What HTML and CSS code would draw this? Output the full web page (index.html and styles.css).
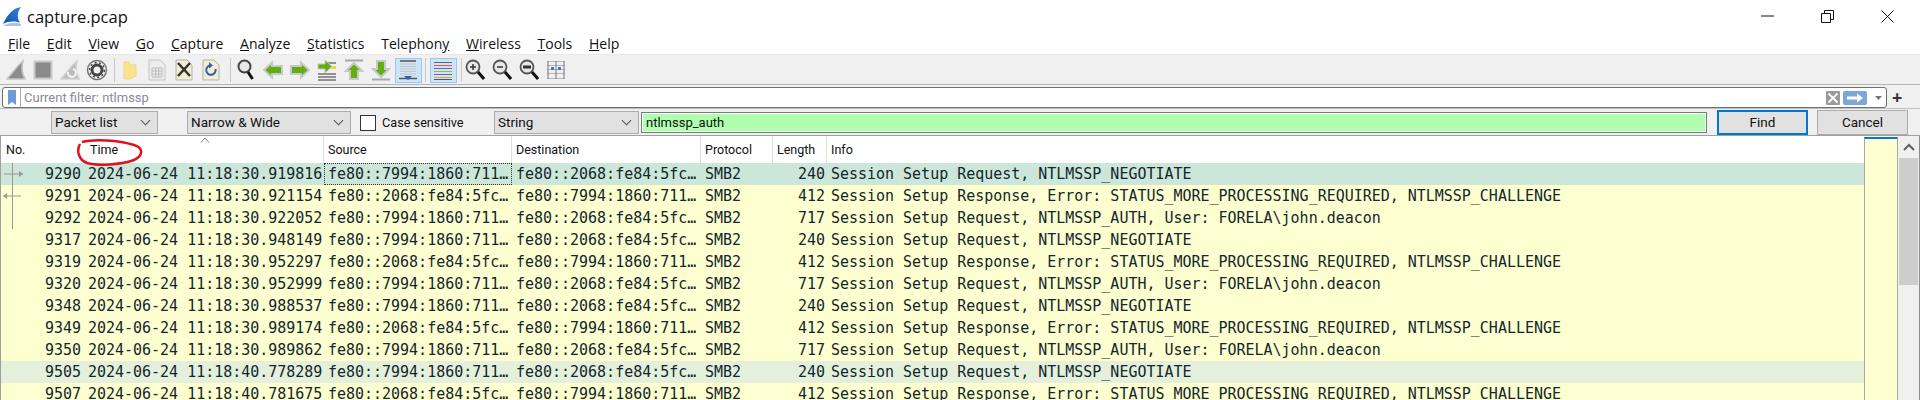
FILE: index.html

```html
<!DOCTYPE html>
<html lang="en">
<head>
    <meta charset="UTF-8">
    <title>capture.pcap</title>
    <link rel="stylesheet" href="styles.css">
</head>
<body>
    <div class="titlebar">
        <svg class="shark" width="20" height="21" viewBox="0 0 20 21">
            <defs><linearGradient id="fin" x1="0" y1="1" x2="1" y2="0"><stop offset="0" stop-color="#0b4fb0"/><stop offset="1" stop-color="#2f86e0"/></linearGradient></defs>
            <path d="M19 1 C11 2 5 9 1 18 C7 15 13 15 18 17 C15 12 15 6 19 1Z" fill="url(#fin)"/>
            <path d="M1 20 C7 16 13 16 19 18 L19 20Z" fill="#a8c4de"/>
        </svg>
        <span class="title">capture.pcap</span>
        <div class="winbtns">
            <svg class="win-min" width="14" height="2" viewBox="0 0 14 2"><path d="M0 1H13" stroke="#111" stroke-width="1"/></svg>
            <svg class="win-max" width="13" height="13" viewBox="0 0 13 13"><path d="M.5 3.500H9.500V12.500H.5ZM3.500 3V.5H12.500V9.500H10" fill="none" stroke="#111"/></svg>
            <svg class="win-close" width="13" height="13" viewBox="0 0 13 13"><path d="M.5 .5L12.500 12.500M12.500 .5L.5 12.500" stroke="#111"/></svg>
        </div>
    </div>

    <div class="menubar">
        <span><u>F</u>ile</span>
        <span><u>E</u>dit</span>
        <span><u>V</u>iew</span>
        <span><u>G</u>o</span>
        <span><u>C</u>apture</span>
        <span><u>A</u>nalyze</span>
        <span><u>S</u>tatistics</span>
        <span>Telephon<u>y</u></span>
        <span><u>W</u>ireless</span>
        <span><u>T</u>ools</span>
        <span><u>H</u>elp</span>
    </div>

    <div class="toolbar">
        <div class="tool"><svg width="20" height="22" viewBox="0 0 20 22"><path d="M1 20 C6 15 10 8 17 2 C15 9 16 15 19 20Z" fill="#8c8c8c" stroke="#c4c4c4" stroke-width="1.500"/></svg></div>
        <div class="tool"><svg width="20" height="20" viewBox="0 0 20 20"><rect x="1.500" y="1.500" width="17" height="17" fill="#8a8a8a" stroke="#c8c8c8" stroke-width="2"/></svg></div>
        <div class="tool"><svg width="20" height="22" viewBox="0 0 20 22"><path d="M1 20 C6 15 10 8 17 2 C15 9 16 15 19 20Z" fill="#bdbdbd" stroke="#d0d0d0" stroke-width="1.500"/><path d="M13 10 A4 4 0 1 1 8 13" fill="none" stroke="#f4f4f4" stroke-width="2"/></svg></div>
        <div class="tool"><svg width="22" height="22" viewBox="0 0 22 22"><circle cx="11" cy="11" r="9.500" fill="#f2f2f2" stroke="#777" stroke-width="1.500"/><circle cx="11" cy="11" r="5" fill="none" stroke="#444" stroke-width="3"/><circle cx="11" cy="11" r="7.400" fill="none" stroke="#444" stroke-width="1.500" stroke-dasharray="2 2.600"/></svg></div>
        <i class="sep s1"></i>
        <div class="tool"><svg width="14" height="19" viewBox="0 0 14 19"><path d="M1 1H6L7.500 4H13V15L7 18H1Z" fill="#fbe38e" stroke="#efd883"/></svg></div>
        <div class="tool"><svg width="18" height="22" viewBox="0 0 18 22"><path d="M1 1H12L17 6V21H1Z" fill="#ececec" stroke="#c4c4c4"/><path d="M4 9H14V18H4ZM4 12H14M4 15H14M7.500 9V18M10.500 9V18" fill="none" stroke="#bcbcbc"/></svg></div>
        <div class="tool"><svg width="18" height="22" viewBox="0 0 18 22"><path d="M1 1H12L17 6V21H1Z" fill="#f6edcf" stroke="#a8b4bc"/><path d="M3 4L15 17M15 4L3 17" stroke="#333" stroke-width="2.500"/></svg></div>
        <div class="tool"><svg width="18" height="22" viewBox="0 0 18 22"><path d="M1 1H12L17 6V21H1Z" fill="#f6edcf" stroke="#a8b4bc"/><path d="M13.500 10A4.700 4.700 0 1 1 8 6.500" fill="none" stroke="#2b62b0" stroke-width="2"/><path d="M7 3L11 6.500L7 9.500Z" fill="#2b62b0"/></svg></div>
        <i class="sep s2"></i>
        <div class="tool"><svg width="18" height="22" viewBox="0 0 18 22"><circle cx="7.500" cy="7.500" r="6" fill="#e8e8e8" stroke="#444" stroke-width="2"/><path d="M11 13L15.500 20" stroke="#111" stroke-width="3"/></svg></div>
        <div class="tool"><svg width="22" height="20" viewBox="0 0 22 20"><path d="M2 10L10 2.500V6H20V14H10V17.500Z" fill="#62ad12" stroke="#c8c8c8" stroke-width="2"/></svg></div>
        <div class="tool"><svg width="22" height="20" viewBox="0 0 22 20"><path d="M20 10L12 2.500V6H2V14H12V17.500Z" fill="#62ad12" stroke="#c8c8c8" stroke-width="2"/></svg></div>
        <div class="tool"><svg width="20" height="22" viewBox="0 0 20 22"><path d="M9 4H19M13 8H19M1 15H19M1 18H19M1 21H19" stroke="#333"/><path d="M14 7H19V10H14Z" fill="#f5d33b"/><path d="M1 5H8V1L15 7.500L8 14V10H1Z" fill="#62ad12" stroke="#c8c8c8"/></svg></div>
        <div class="tool"><svg width="20" height="22" viewBox="0 0 20 22"><path d="M1 1.500H19" stroke="#a8a8a8" stroke-width="2"/><path d="M10 4L18 12H14V20H6V12H2Z" fill="#62ad12" stroke="#c8c8c8" stroke-width="2"/></svg></div>
        <div class="tool"><svg width="20" height="22" viewBox="0 0 20 22"><path d="M1 20.500H19" stroke="#a8a8a8" stroke-width="2"/><path d="M10 18L18 10H14V2H6V10H2Z" fill="#62ad12" stroke="#c8c8c8" stroke-width="2"/></svg></div>
        <div class="tool on"><svg width="20" height="22" viewBox="0 0 20 22"><path d="M2 2H18" stroke="#777" stroke-width="2"/><path d="M2 5H18M2 7.500H18M2 10H18M2 12.500H18M2 15H18" stroke="#c6c6c6"/><path d="M1 19.500H19" stroke="#555" stroke-width="1.500"/><path d="M6 17H14L10 21Z" fill="#2a5fb0"/></svg></div>
        <i class="sep s3"></i>
        <div class="tool on"><svg width="20" height="20" viewBox="0 0 20 20"><path d="M1 2.500H19" stroke="#666"/><path d="M1 5.500H19" stroke="#e85050"/><path d="M1 8.500H19" stroke="#6a6ab0"/><path d="M1 11.500H19" stroke="#8dc040"/><path d="M1 14.500H19" stroke="#8a5aa0"/><path d="M1 17.500H19" stroke="#d0a840"/><path d="M1 19.500H19" stroke="#555"/></svg></div>
        <i class="sep s4"></i>
        <div class="tool"><svg width="20" height="22" viewBox="0 0 20 22"><circle cx="8" cy="8" r="6.500" fill="#e8e8e8" stroke="#555" stroke-width="1.800"/><path d="M5 8H11M8 5V11" stroke="#333" stroke-width="1.500"/><path d="M13 13L19 20" stroke="#111" stroke-width="3"/></svg></div>
        <div class="tool"><svg width="20" height="22" viewBox="0 0 20 22"><circle cx="8" cy="8" r="6.500" fill="#e8e8e8" stroke="#555" stroke-width="1.800"/><path d="M5 8H11" stroke="#333" stroke-width="1.500"/><path d="M13 13L19 20" stroke="#111" stroke-width="3"/></svg></div>
        <div class="tool"><svg width="20" height="22" viewBox="0 0 20 22"><circle cx="8" cy="8" r="6.500" fill="#e8e8e8" stroke="#555" stroke-width="1.800"/><path d="M4 8H12" stroke="#333" stroke-width="3"/><path d="M13 13L19 20" stroke="#111" stroke-width="3"/></svg></div>
        <div class="tool"><svg width="20" height="20" viewBox="0 0 20 20"><path d="M1 1.500H19M1 18.500H19M1 5.500H19M1 9.500H19M1 13.500H19" stroke="#b4b4b4"/><path d="M2 1V19M10 1V19M18 1V19" stroke="#777"/><path d="M5 7H8V10H5ZM12 7H15V10H12Z" fill="#3f74c4"/></svg></div>
    </div>

    <div class="filterbar">
        <div class="filter">
            <div class="bookmark"><svg width="8" height="15" viewBox="0 0 8 15"><path d="M0 0H8V15L4 12L0 15Z" fill="#6c9bd6"/></svg></div>
            <span class="filter-text">Current filter: ntlmssp</span>
            <svg class="clear" width="14" height="14" viewBox="0 0 14 14"><rect width="14" height="14" rx="1" fill="#9a9a9a"/><path d="M2.500 2.500L11.500 11.500M11.500 2.500L2.500 11.500" stroke="#fff" stroke-width="1.800"/></svg>
            <svg class="apply" width="24" height="14" viewBox="0 0 24 14"><rect width="24" height="14" rx="2" fill="#7ba7d9"/><path d="M4 5.500H14V2.500L20 7L14 11.500V8.500H4Z" fill="#fff"/></svg>
            <svg class="drop" width="7" height="4" viewBox="0 0 7 4"><path d="M0 0H7L3.500 4Z" fill="#777"/></svg>
        </div>
        <span class="plus">+</span>
    </div>

    <div class="findbar">
        <div class="combo combo-list">Packet list</div>
        <div class="combo combo-width">Narrow &amp; Wide</div>
        <label class="check"><i></i>Case sensitive</label>
        <div class="combo combo-type">String</div>
        <div class="find-input">ntlmssp_auth</div>
        <div class="btn btn-find">Find</div>
        <div class="btn btn-cancel">Cancel</div>
    </div>

    <div class="packets">
        <div class="list">
            <div class="head">
                <span class="c-no">No.</span>
                <span class="c-time">Time</span>
                <span class="c-src">Source</span>
                <span class="c-dst">Destination</span>
                <span class="c-proto">Protocol</span>
                <span class="c-len">Length</span>
                <span class="c-info">Info</span>
            </div>
            <div id="rows"></div>

            <svg class="sort" width="10" height="6" viewBox="0 0 10 6"><path d="M1 5.500L5 1L9 5.500" fill="none" stroke="#777"/></svg>
            <svg class="mark" width="70" height="28" viewBox="0 0 70 28"><path d="M6 3 C18 0 42 1 58 6 C68 9 67 17 58 21 C44 26 22 27 11 24 C3 21 0 12 4 5" fill="none" stroke="#e2101c" stroke-width="2.500"/></svg>
            <svg class="related" width="24" height="66" viewBox="0 0 24 66"><path d="M11.500 0V66" stroke="#999"/><path d="M3 11H22" stroke="#999"/><path d="M18 8L22 11L18 14Z" fill="#999"/><path d="M2 33H20" stroke="#999"/><path d="M6 30L2 33L6 36Z" fill="#999"/></svg>
        </div>
        <div class="minimap"></div>
        <div class="scrollbar">
            <div class="scroll-up"><svg width="12" height="8" viewBox="0 0 12 8"><path d="M1 7L6 2L11 7" fill="none" stroke="#606060" stroke-width="2"/></svg></div>
            <div class="thumb"></div>
        </div>
    </div>

    <script>
        // n, time, source, destination, length, info
        var a = 'fe80::7994:1860:711…';
        var b = 'fe80::2068:fe84:5fc…';
        var neg = 'Session Setup Request, NTLMSSP_NEGOTIATE';
        var chal = 'Session Setup Response, Error: STATUS_MORE_PROCESSING_REQUIRED, NTLMSSP_CHALLENGE';
        var auth = 'Session Setup Request, NTLMSSP_AUTH, User: FORELA\\john.deacon';
        var packets = [
            [9290, '30.919816', a, b, 240, neg, 'sel'],
            [9291, '30.921154', b, a, 412, chal],
            [9292, '30.922052', a, b, 717, auth],
            [9317, '30.948149', a, b, 240, neg],
            [9319, '30.952297', b, a, 412, chal],
            [9320, '30.952999', a, b, 717, auth],
            [9348, '30.988537', a, b, 240, neg],
            [9349, '30.989174', b, a, 412, chal],
            [9350, '30.989862', a, b, 717, auth],
            [9505, '40.778289', a, b, 240, neg, 'rel'],
            [9507, '40.781675', b, a, 412, chal]
        ];

        var rows = document.getElementById('rows');
        packets.forEach(function (p) {
            var div = document.createElement('div');
            div.className = 'row ' + (p[6] || '');
            div.innerHTML = `
                <span class="c-no">${p[0]}</span>
                <span class="c-time">2024-06-24 11:18:${p[1]}</span>
                <span class="c-src">${p[2]}</span>
                <span class="c-dst">${p[3]}</span>
                <span class="c-proto">SMB2</span>
                <span class="c-len">${p[4]}</span>
                <span class="c-info">${p[5]}</span>
            `;
            rows.appendChild(div);
        });
    </script>
</body>
</html>
```

FILE: styles.css

```css
/* General */
body {
    margin: 0;
    height: 400px;
    overflow: hidden;
    background-color: #f0f0f0;
    font-family: "Open Sans", "Noto Sans", sans-serif;
    font-size: 14px;
    color: #111;
}

/* Title bar and menu */
.titlebar {
    height: 32px;
    background-color: #fff;
    display: flex;
    align-items: center;
    padding-left: 2px;
}

.title {
    margin-left: 5px;
    font-size: 16.5px;
}

.winbtns {
    margin-left: auto;
    display: flex;
    align-items: center;
}

.win-min { margin-right: 46px; }
.win-max { margin-right: 47px; }
.win-close { margin-right: 26px; }

.menubar {
    height: 22px;
    background-color: #fff;
    border-bottom: 1px solid #e8e8e8;
    display: flex;
    align-items: center;
    gap: 16.7px;
    padding-left: 8px;
}

/* Main toolbar */
.toolbar {
    height: 28px;
    padding: 1px 0 0 2.5px;
    border-bottom: 1px solid #b4b4b4;
    display: flex;
    align-items: center;
}

.tool {
    width: 27px;
    height: 25px;
    box-sizing: border-box;
    display: flex;
    align-items: center;
    justify-content: center;
}

.tool.on {
    background-color: #cce4f7;
    border: 1px solid #99c9ef;
}

.sep {
    width: 1px;
    height: 24px;
    background-color: #c8c8c8;
}

.s1 { margin: 0 2px 0 3px; }
.s2 { margin: 0 2px 0 5px; }
.s3 { margin: 0 4px 0 3px; }
.s4 { margin: 0 0 0 4px; }

/* Display filter */
.filterbar {
    height: 21px;
    padding: 2px 0 0 2px;
    border-bottom: 1px solid #c0c0c0;
    display: flex;
    gap: 5px;
}

.filter {
    width: 1885px;
    height: 21px;
    box-sizing: border-box;
    border: 1px solid #707070;
    border-radius: 3px;
    background-color: #fff;
    display: flex;
    align-items: center;
}

.bookmark {
    width: 17px;
    height: 100%;
    border-right: 1px solid #b0b0b0;
    display: flex;
    align-items: center;
    justify-content: center;
}

.filter-text {
    margin-left: 3px;
    color: #8a8a98;
    font-family: Roboto, sans-serif;
    font-size: 13px;
}

.clear { margin-left: auto; }
.apply { margin-left: 3px; }
.drop { margin: 0 4px 0 8px; }

.plus {
    font-size: 18px;
    font-weight: 700;
    line-height: 20px;
    color: #333;
}

/* Find bar */
.findbar {
    height: 25px;
    padding-top: 1px;
    display: flex;
    align-items: flex-start;
    font-family: Roboto, sans-serif;
    font-size: 13.5px;
}

.combo {
    height: 23px;
    box-sizing: border-box;
    margin-top: 1px;
    border: 1px solid #adadad;
    background-color: #e1e1e1;
    padding-left: 3px;
    line-height: 21px;
    position: relative;
}

.combo::after {
    content: "";
    position: absolute;
    right: 8px;
    top: 5px;
    width: 6px;
    height: 6px;
    border-right: 1px solid #555;
    border-bottom: 1px solid #555;
    transform: rotate(45deg);
}

.combo-list { width: 107px; margin-left: 51px; }
.combo-width { width: 164px; margin-left: 29px; }
.combo-type { width: 145px; margin-left: 33px; }

.check {
    display: flex;
    align-items: center;
    gap: 6px;
    margin: 1px 0 0 9px;
    height: 23px;
    width: 101px;
    white-space: nowrap;
    font-size: 12.7px;
}

.check i {
    width: 14px;
    height: 14px;
    flex: none;
    border: 1px solid #333;
    background-color: #fff;
}

.find-input {
    width: 1066px;
    height: 21px;
    box-sizing: border-box;
    margin: 2px 0 0 2px;
    border: 1px solid #7a7a7a;
    box-shadow: inset 0 0 0 1px #fff;
    background-color: #afffaf;
    padding-left: 4px;
    line-height: 19px;
    font-size: 13px;
}

.btn {
    width: 91px;
    height: 25px;
    box-sizing: border-box;
    background-color: #e1e1e1;
    text-align: center;
    line-height: 21px;
}

.btn-find {
    margin-left: 10px;
    border: 2px solid #0078d7;
}

.btn-cancel {
    margin-left: 9px;
    border: 1px solid #adadad;
    line-height: 23px;
}

/* Packet list */
.packets {
    height: 264px;
    border-top: 1px solid #a0a0a0;
    border-left: 1px solid #a0a0a0;
    display: flex;
    background-color: #fff;
}

.list {
    width: 1863px;
    position: relative;
    overflow: hidden;
}

.head, .row {
    display: flex;
    white-space: nowrap;
}

.head {
    height: 27px;
    line-height: 27px;
    font-family: Roboto, sans-serif;
    font-size: 12.5px;
    background-color: #fff;
}

.head span {
    border-right: 1px solid #e0e0e0;
    box-sizing: border-box;
    padding-left: 4px;
}

.head .c-no { width: 84px; border-right: none; padding-left: 5px; }
.head .c-time { width: 239px; padding-left: 5px; }
.head .c-info { border-right: none; }

.row {
    height: 22px;
    line-height: 22px;
    background-color: #feffd0;
    color: #12272e;
    font-family: "DejaVu Sans Mono", monospace;
    font-size: 14.97px;
}

.row.sel { background-color: #cce6d9; }
.row.rel { background-color: #e4f0db; }

.row span {
    box-sizing: border-box;
    padding-left: 4px;
}

.row.sel .c-src {
    outline: 1px dotted #333;
    outline-offset: -1px;
}

.c-no { width: 84px; }
.c-time { width: 239px; }
.c-src { width: 188px; }
.c-dst { width: 189px; }
.c-proto { width: 72px; }
.c-len { width: 54px; }
.c-info { width: 1036px; }

.row .c-no {
    text-align: right;
    padding-right: 4px;
}

.row .c-time { padding-left: 3px; }

.row .c-len {
    text-align: right;
    padding-right: 2px;
}

.sort {
    position: absolute;
    left: 199px;
    top: 1px;
}

.mark {
    position: absolute;
    left: 75px;
    top: 3px;
}

.related {
    position: absolute;
    left: 0;
    top: 27px;
}

/* Right side */
.minimap {
    width: 34px;
    box-sizing: border-box;
    border-left: 1px solid #a8a8a8;
    border-right: 1px solid #a8a8a8;
    border-top: 2px solid #0078d7;
    background-color: #feffd0;
    margin-top: 1px;
}

.scrollbar {
    width: 22px;
    border-right: 1px solid #8a8a90;
    box-sizing: border-box;
    background-color: #f0f0f0;
    padding-left: 1px;
}

.scroll-up {
    height: 22px;
    display: flex;
    align-items: center;
    justify-content: center;
}

.thumb {
    width: 19px;
    height: 127px;
    background-color: #cdcdcd;
}
```
